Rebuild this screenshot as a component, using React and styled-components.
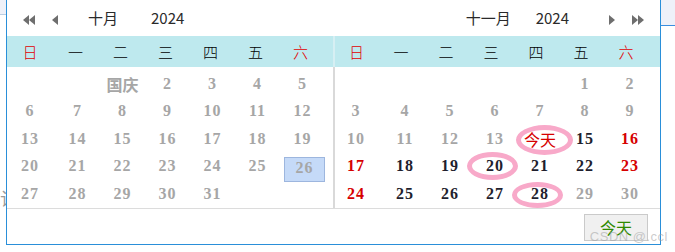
import React from 'react';
import styled, { createGlobalStyle } from 'styled-components';

const GlobalStyle = createGlobalStyle`
	body {
		margin: 0;
		background: #ffffff;
		font-family: 'Noto Sans CJK SC', 'Liberation Sans', sans-serif;
	}
`;

const WEEK = ['日', '一', '二', '三', '四', '五', '六'];

const octDays = [
	null, null,
	{ t: '国庆', tone: 'past', cjk: true }, { t: 2, tone: 'past' }, { t: 3, tone: 'past' }, { t: 4, tone: 'past' }, { t: 5, tone: 'past' },
	...Array.from({ length: 26 }, (_, i) => ({
		t: i + 6,
		tone: 'past',
		selected: i + 6 === 26,
	})),
];

const novTone = (d) => {
	if (d < 14 || d > 28) return 'past';
	const dow = (d + 4) % 7;
	if (dow === 0 || dow === 6) return 'weekend';
	return 'normal';
};

const rings = {
	14: { w: 57, h: 30, dx: 4, dy: 1 },
	20: { w: 51, h: 28, dx: -3, dy: 0 },
	28: { w: 51, h: 26, dx: -3, dy: 1 },
};

const novDays = [
	null, null, null, null, null,
	...Array.from({ length: 30 }, (_, i) => {
		const d = i + 1;
		if (d === 14) return { t: '今天', tone: 'today', cjk: true, ring: rings[14] };
		return { t: d, tone: novTone(d), ring: rings[d] };
	}),
];

const NavIcon = ({ dir, double }) => {
	const tri = (x) =>
		dir === 'left'
			? `${x + 6},0 ${x + 6},10 ${x},5`
			: `${x},0 ${x},10 ${x + 6},5`;
	return (
		<NavSvg width={double ? 12 : 6} height='10' viewBox={`0 0 ${double ? 12 : 6} 10`}>
			<polygon points={tri(0)} />
			{double && <polygon points={tri(6)} />}
		</NavSvg>
	);
};

const MonthPanel = ({ days, first, shift }) => (
	<Panel>
		<WeekRow $first={first}>
			{WEEK.map((w, i) => (
				<WeekCell key={w} $red={i === 0 || i === 6}>
					{w}
				</WeekCell>
			))}
		</WeekRow>
		<DayGrid>
			{days.map((d, i) => (
				<DayCell key={i} $lead={i % 7 === 0} $shift={shift}>
					{d && (
						<DayText $tone={d.tone} $cjk={d.cjk} $selected={d.selected}>
							{d.t}
						</DayText>
					)}
					{d && d.ring && (
						<Ring
							$w={d.ring.w}
							$h={d.ring.h}
							$dx={d.ring.dx}
							$dy={d.ring.dy}
						/>
					)}
				</DayCell>
			))}
		</DayGrid>
	</Panel>
);

const App = () => {
	return (
		<>
			<GlobalStyle />
			<Page>
				<LeftGutter>
					<GutterTab $h={14} />
					<GhostChar>认</GhostChar>
				</LeftGutter>
				<Popup>
					<Header>
						<HeaderHalf $side='left'>
							<NavIcon dir='left' double />
							<NavIcon dir='left' />
							<Month>十月</Month>
							<Year>2024</Year>
						</HeaderHalf>
						<HeaderHalf $side='right'>
							<Month>十一月</Month>
							<Year>2024</Year>
							<NavIcon dir='right' />
							<NavIcon dir='right' double />
						</HeaderHalf>
					</Header>
					<Panels>
						<MonthPanel days={octDays} first={46} shift={2} />
						<Divider />
						<MonthPanel days={novDays} first={44} shift={5} />
					</Panels>
					<Footer>
						<TodayButton>今天</TodayButton>
					</Footer>
				</Popup>
				<RightGutter>
					<GutterTab $h={25} $accent />
				</RightGutter>
				<Watermark>CSDN @.ccl</Watermark>
			</Page>
		</>
	);
};

export default App;

const Page = styled.div`
	position: relative;
	display: flex;
	width: 675px;
	height: 252px;
	overflow: hidden;
	background: #ffffff;
`;

const LeftGutter = styled.div`
	display: flex;
	flex-direction: column;
	width: 6px;
	overflow: hidden;
`;

const GutterTab = styled.div`
	height: ${(p) => p.$h}px;
	background: #eef1f9;
	border-bottom: 1px solid ${(p) => (p.$accent ? '#3a8ee0' : '#b9cde3')};
	flex-shrink: 0;
`;

const GhostChar = styled.div`
	margin-top: 173px;
	font-size: 18px;
	line-height: 20px;
	color: #9a9a9a;
	white-space: nowrap;
`;

const RightGutter = styled.div`
	display: flex;
	flex-direction: column;
	flex: 1;
`;

const Popup = styled.div`
	display: flex;
	flex-direction: column;
	box-sizing: border-box;
	width: 655px;
	height: 245px;
	border: 1px solid #2a8fd9;
	border-top: none;
	background: #ffffff;
`;

const Header = styled.div`
	display: flex;
	height: 36px;
	color: #2a2a2a;
	font-size: 15px;
`;

const HeaderHalf = styled.div`
	display: flex;
	align-items: center;
	box-sizing: border-box;
	${(p) =>
		p.$side === 'left'
			? `
		width: 328px;
		padding-left: 16px;
		& > :nth-child(2) { margin-left: 17px; }
		& > :nth-child(3) { margin-left: 30px; }
		& > :nth-child(4) { margin-left: 33px; }
	`
			: `
		flex: 1;
		justify-content: flex-end;
		padding-right: 16px;
		& > :nth-child(2) { margin-left: 25px; }
		& > :nth-child(3) { margin-left: 40px; }
		& > :nth-child(4) { margin-left: 17px; }
	`}
`;

const NavSvg = styled.svg`
	fill: #6e6e6e;
	margin-top: 3px;
	flex-shrink: 0;
`;

const Month = styled.span`
	font-family: 'Noto Sans CJK SC', sans-serif;
	font-size: 15px;
	line-height: 20px;
`;

const Year = styled.span`
	font-family: 'Noto Sans CJK SC', sans-serif;
	font-size: 15px;
	line-height: 20px;
`;

const Panels = styled.div`
	display: flex;
`;

const Panel = styled.div`
	display: flex;
	flex-direction: column;
	flex: 1;
`;

const Divider = styled.div`
	width: 2px;
	background: linear-gradient(#d6eff3 0 31px, #d9d9d9 31px);
`;

const WeekRow = styled.div`
	display: grid;
	grid-template-columns: ${(p) => p.$first}px repeat(6, 45px);
	height: 31px;
	background: #bee9ee;
	align-items: center;
`;

const WeekCell = styled.span`
	text-align: center;
	font-family: 'Noto Sans CJK SC', sans-serif;
	font-size: 15px;
	font-weight: 300;
	line-height: 20px;
	color: ${(p) => (p.$red ? '#e00000' : '#000000')};
`;

const DayGrid = styled.div`
	display: grid;
	grid-template-columns: 48px repeat(6, 45px);
	grid-auto-rows: 27.5px;
	padding-top: 3px;
`;

const DayCell = styled.div`
	position: relative;
	display: flex;
	align-items: center;
	justify-content: center;
	padding-right: ${(p) => (p.$lead ? p.$shift : 0)}px;
`;

const toneColor = {
	past: '#a6a6a6',
	normal: '#1f1f2e',
	weekend: '#d60000',
	today: '#d60000',
};

const DayText = styled.span`
	font-family: ${(p) =>
		p.$cjk ? "'Noto Sans CJK SC', sans-serif" : "'Liberation Serif', serif"};
	font-size: 16px;
	font-weight: ${(p) => (p.$cjk && p.$tone === 'today' ? 400 : 700)};
	letter-spacing: ${(p) => (p.$cjk ? 0 : 1)}px;
	line-height: 20px;
	color: ${(p) => toneColor[p.$tone]};
	${(p) =>
		p.$selected &&
		`
		box-sizing: border-box;
		width: 47px;
		height: 25px;
		margin: 6px 0 0 4px;
		text-align: center;
		background: #c5daf8;
		border: 1px solid #9db6de;
		line-height: 20px;
	`}
`;

const Ring = styled.span`
	position: absolute;
	left: 50%;
	top: 50%;
	box-sizing: border-box;
	width: ${(p) => p.$w}px;
	height: ${(p) => p.$h}px;
	margin-left: ${(p) => -p.$w / 2 + p.$dx}px;
	margin-top: ${(p) => -p.$h / 2 + p.$dy}px;
	border: 5px solid #f8a9c9;
	border-radius: 50%;
	pointer-events: none;
`;

const Footer = styled.div`
	display: flex;
	flex: 1;
	justify-content: flex-end;
	align-items: flex-start;
	padding: 5px 12px 0 0;
	border-top: 1px solid #dcdcdc;
`;

const TodayButton = styled.button`
	box-sizing: border-box;
	width: 64px;
	height: 27px;
	padding: 0;
	border: 1px solid #cacaca;
	background: #f0f0f0;
	color: #2f8a00;
	font-family: 'Noto Sans CJK SC', sans-serif;
	font-size: 16px;
	line-height: 20px;
`;

const Watermark = styled.span`
	position: absolute;
	right: 7px;
	bottom: 9px;
	font-family: 'Liberation Sans', sans-serif;
	font-size: 13px;
	line-height: 13px;
	letter-spacing: 0.5px;
	color: rgba(160, 160, 160, 0.55);
	pointer-events: none;
`;
